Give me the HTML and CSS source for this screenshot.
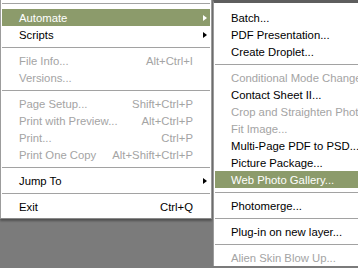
FILE: index.html
```html
<!DOCTYPE html>
<html lang="en">
<head>
  <meta charset="UTF-8" />
  <title>File menu</title>
  <link rel="stylesheet" href="styles.css">
</head>
<body>
  <div class="screen">
    <div class="edge"></div>
    <div class="stripe"></div>
    <div class="stripe-line"></div>

    <div class="menu main">
      <div class="sep top"></div>
      <div class="item active"><span>Automate</span><span></span><span class="arrow"></span></div>
      <div class="item"><span>Scripts</span><span></span><span class="arrow"></span></div>
      <div class="sep"></div>
      <div class="item off"><span>File Info...</span><span class="key">Alt+Ctrl+I</span><span></span></div>
      <div class="item off"><span>Versions...</span><span></span><span></span></div>
      <div class="sep"></div>
      <div class="item off"><span>Page Setup...</span><span class="key">Shift+Ctrl+P</span><span></span></div>
      <div class="item off"><span>Print with Preview...</span><span class="key">Alt+Ctrl+P</span><span></span></div>
      <div class="item off"><span>Print...</span><span class="key">Ctrl+P</span><span></span></div>
      <div class="item off"><span>Print One Copy</span><span class="key">Alt+Shift+Ctrl+P</span><span></span></div>
      <div class="sep"></div>
      <div class="item"><span>Jump To</span><span></span><span class="arrow"></span></div>
      <div class="sep"></div>
      <div class="item"><span>Exit</span><span class="key">Ctrl+Q</span><span></span></div>
    </div>

    <div class="menu sub">
      <div class="item"><span>Batch...</span></div>
      <div class="item"><span>PDF Presentation...</span></div>
      <div class="item"><span>Create Droplet...</span></div>
      <div class="sep"></div>
      <div class="item off"><span>Conditional Mode Change...</span></div>
      <div class="item"><span>Contact Sheet II...</span></div>
      <div class="item off"><span>Crop and Straighten Photos</span></div>
      <div class="item off"><span>Fit Image...</span></div>
      <div class="item"><span>Multi-Page PDF to PSD...</span></div>
      <div class="item"><span>Picture Package...</span></div>
      <div class="item active"><span>Web Photo Gallery...</span></div>
      <div class="sep"></div>
      <div class="item"><span>Photomerge...</span></div>
      <div class="sep"></div>
      <div class="item"><span>Plug-in on new layer...</span></div>
      <div class="sep"></div>
      <div class="item off"><span>Alien Skin Blow Up...</span></div>
    </div>
  </div>
</body>
</html>
```

FILE: styles.css
```css
body {
  margin: 0;
  font-family: 'Liberation Sans', Arial, sans-serif;
  font-size: 11.3px;
  color: #000;
  background: #7b7b7b;
  overflow: hidden;
}
.screen {
  display: flex;
  align-items: flex-start;
  width: 358px;
  height: 268px;
  overflow: hidden;
}
.edge {
  width: 4px;
  height: 100%;
  background: linear-gradient(#262a18, #3a3020 45%, #6a4424 75%, #8a5a30);
}
.stripe {
  width: 4px;
  height: 100%;
  background: linear-gradient(#90a468, #a8bc7c 50%, #b4c488);
}
.stripe-line {
  width: 1px;
  height: 100%;
  background: #4c5638;
}
.menu {
  background: #fff;
  white-space: nowrap;
}
.main {
  width: 210px;
  flex: none;
  border-left: 1px solid #9c9c9c;
  border-right: 1px solid #9c9c9c;
  border-bottom: 1px solid #8a8a8a;
  padding-bottom: 3px;
  box-shadow: 0 2px 2px rgba(0, 0, 0, 0.35);
}
.sub {
  flex: none;
  width: 150px;
  margin-left: 1px;
  border-top: 3px solid #5e5e5e;
  border-left: 1px solid #9c9c9c;
  padding-top: 6px;
}
.item {
  display: grid;
  grid-template-columns: 1fr auto 17px;
  align-items: center;
  height: 17px;
  margin: 0 1px;
  padding-left: 17px;
}
.sub .item {
  display: flex;
  padding-left: 16px;
}
.item.off {
  color: #a4a4a4;
}
.item.active {
  background: #8c9b6b;
  color: #fff;
}
.key {
  text-align: right;
}
.arrow {
  justify-self: end;
  margin-right: 3px;
  width: 0;
  height: 0;
  border-top: 3.5px solid transparent;
  border-bottom: 3.5px solid transparent;
  border-left: 4px solid #000;
}
.active .arrow {
  border-left-color: #fff;
}
.sep {
  height: 9px;
  margin: 0 1px;
  background: linear-gradient(transparent 4px, #a2a2a2 4px, #a2a2a2 5px, transparent 5px);
}
.sep.top {
  background: linear-gradient(transparent 3px, #a2a2a2 3px, #a2a2a2 4px, transparent 4px);
}
```
